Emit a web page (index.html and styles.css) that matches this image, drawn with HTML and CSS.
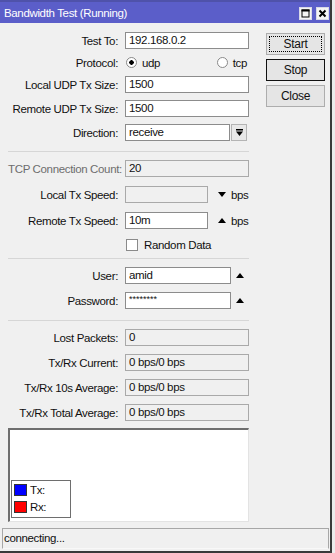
FILE: index.html
```html
<!DOCTYPE html>
<html lang="en">
<head>
  <meta charset="UTF-8">
  <meta name="viewport" content="width=device-width, initial-scale=1.0">
  <title>Bandwidth Test (Running)</title>
  <link rel="stylesheet" href="styles.css">
</head>
<body>

  <div class="window">
    <div class="titlebar">
      <span class="title">Bandwidth Test (Running)</span>
      <span class="title-buttons">
        <svg class="title-btn" width="13" height="13" viewBox="0 0 13 13">
          <rect x="0.5" y="0.5" width="12" height="12" fill="#f4f4f4" stroke="#d8d8e8"/>
          <rect x="3" y="3" width="7" height="7" fill="none" stroke="#000" stroke-width="1"/>
          <rect x="2.5" y="2.5" width="8" height="2" fill="#000"/>
        </svg>
        <svg class="title-btn" width="13" height="13" viewBox="0 0 13 13">
          <rect x="0.5" y="0.5" width="12" height="12" fill="#f4f4f4" stroke="#d8d8e8"/>
          <path d="M3.5 3.5 L9.5 9.5 M9.5 3.5 L3.5 9.5" stroke="#000" stroke-width="2"/>
        </svg>
      </span>
    </div>

    <div class="content">
      <div class="form">

        <div class="group group-top">
          <div class="row">
            <span class="lbl">Test To:</span>
            <div class="field">192.168.0.2</div>
          </div>
          <div class="row row-small">
            <span class="lbl">Protocol:</span>
            <div class="radios">
              <span class="opt"><span class="radio on"></span>udp</span>
              <span class="opt"><span class="radio"></span>tcp</span>
            </div>
          </div>
          <div class="row">
            <span class="lbl">Local UDP Tx Size:</span>
            <div class="field">1500</div>
          </div>
          <div class="row">
            <span class="lbl">Remote UDP Tx Size:</span>
            <div class="field">1500</div>
          </div>
          <div class="row">
            <span class="lbl">Direction:</span>
            <div class="ctrl">
              <div class="field field-select">receive</div>
              <span class="drop-btn">
                <svg width="7" height="7" viewBox="0 0 7 7"><rect x="0" y="0" width="7" height="1.5" fill="#000"/><path d="M0 2.5 H7 L3.5 7 Z" fill="#000"/></svg>
              </span>
            </div>
          </div>
        </div>

        <div class="group group-speed">
          <div class="row">
            <span class="lbl lbl-disabled">TCP Connection Count:</span>
            <div class="field ro">20</div>
          </div>
          <div class="row">
            <span class="lbl">Local Tx Speed:</span>
            <div class="ctrl">
              <div class="field ro field-speed"></div>
              <svg class="arrow" width="8" height="5" viewBox="0 0 8 5"><path d="M0 0 H8 L4 5 Z" fill="#000"/></svg>
              <span class="unit">bps</span>
            </div>
          </div>
          <div class="row">
            <span class="lbl">Remote Tx Speed:</span>
            <div class="ctrl">
              <div class="field field-speed">10m</div>
              <svg class="arrow" width="8" height="5" viewBox="0 0 8 5"><path d="M0 5 H8 L4 0 Z" fill="#000"/></svg>
              <span class="unit">bps</span>
            </div>
          </div>
          <div class="row row-small">
            <span></span>
            <span class="opt"><span class="checkbox"></span>Random Data</span>
          </div>
        </div>

        <div class="group group-auth">
          <div class="row">
            <span class="lbl">User:</span>
            <div class="ctrl">
              <div class="field field-auth">amid</div>
              <svg class="arrow arrow-auth" width="8" height="5" viewBox="0 0 8 5"><path d="M0 5 H8 L4 0 Z" fill="#000"/></svg>
            </div>
          </div>
          <div class="row">
            <span class="lbl">Password:</span>
            <div class="ctrl">
              <div class="field field-auth pass">********</div>
              <svg class="arrow arrow-auth" width="8" height="5" viewBox="0 0 8 5"><path d="M0 5 H8 L4 0 Z" fill="#000"/></svg>
            </div>
          </div>
        </div>

        <div class="group group-stats">
          <div class="row">
            <span class="lbl">Lost Packets:</span>
            <div class="field ro">0</div>
          </div>
          <div class="row">
            <span class="lbl">Tx/Rx Current:</span>
            <div class="field ro">0 bps/0 bps</div>
          </div>
          <div class="row">
            <span class="lbl">Tx/Rx 10s Average:</span>
            <div class="field ro">0 bps/0 bps</div>
          </div>
          <div class="row">
            <span class="lbl">Tx/Rx Total Average:</span>
            <div class="field ro">0 bps/0 bps</div>
          </div>
        </div>

        <div class="graph">
          <div class="legend">
            <div class="legend-item"><span class="swatch swatch-tx"></span>Tx:</div>
            <div class="legend-item"><span class="swatch swatch-rx"></span>Rx:</div>
          </div>
        </div>

      </div>

      <div class="buttons">
        <button class="btn btn-focus">Start</button>
        <button class="btn btn-default">Stop</button>
        <button class="btn">Close</button>
      </div>
    </div>

    <div class="status">connecting...</div>
  </div>

</body>
</html>
```

FILE: styles.css
```css
body {
  margin: 0;
  background-color: #ececec;
  font-family: "Liberation Sans", Arial, sans-serif;
  font-size: 11.5px;
  letter-spacing: -0.35px;
  color: #111;
}

.window {
  width: 330px;
  height: 551px;
  background-color: #f0f0f0;
  border-right: 2px solid #3a3a3a;
  border-bottom: 2px solid #3a3a3a;
  display: flex;
  flex-direction: column;
}

.titlebar {
  height: 23px;
  box-sizing: border-box;
  border-top: 2px solid #4f52aa;
  background-color: #5b5ec9;
  color: white;
  font-size: 11.5px;
  display: flex;
  align-items: center;
  justify-content: space-between;
  padding: 1px 1px 0 4px;
}

.title-buttons {
  display: flex;
  gap: 4px;
}

.title-btn {
  display: block;
}

.content {
  display: flex;
  padding: 9px 0 0 8px;
}

.form {
  width: 241px;
  display: flex;
  flex-direction: column;
}

.group {
  display: flex;
  flex-direction: column;
}

.group-top {
  gap: 7px;
  padding-bottom: 10px;
}

.group-speed {
  gap: 9px;
  padding: 8px 0 7px;
  border-top: 1px solid #d6d6d6;
}

.group-auth {
  gap: 8px;
  padding: 8px 0 11px;
  border-top: 1px solid #d6d6d6;
}

.group-stats {
  gap: 8px;
  padding-top: 8px;
  border-top: 1px solid #d6d6d6;
}

.row {
  display: grid;
  grid-template-columns: 110px 124px;
  column-gap: 7px;
  align-items: center;
  height: 17px;
}

.row-small {
  height: 13px;
}

.lbl {
  text-align: right;
  white-space: nowrap;
}

.lbl-disabled {
  color: #6d6d6d;
}

.field {
  box-sizing: border-box;
  height: 17px;
  border: 1px solid #8c8c8c;
  background-color: white;
  padding: 0 3px;
  line-height: 15px;
  white-space: nowrap;
  overflow: hidden;
}

.field.ro {
  background-color: #f0f0f0;
  border-color: #a9a9a9;
}

.ctrl {
  display: flex;
  align-items: center;
}

.field-select {
  width: 105px;
}

.drop-btn {
  box-sizing: border-box;
  width: 16px;
  height: 17px;
  margin-left: 1px;
  border: 1px solid #b4b4b4;
  background-color: #e8e8e8;
  display: flex;
  align-items: center;
  justify-content: center;
}

.field-speed {
  width: 83px;
}

.field-auth {
  width: 106px;
}

.pass {
  font-size: 9px;
  line-height: 12px;
  letter-spacing: 0;
}

.arrow {
  margin-left: 10px;
}

.arrow-auth {
  margin-left: 5px;
}

.unit {
  margin-left: 5px;
}

.radios {
  display: flex;
  justify-content: space-between;
  padding: 0 2px 0 1px;
}

.opt {
  display: flex;
  align-items: center;
}

.radio {
  box-sizing: border-box;
  width: 11px;
  height: 11px;
  margin-right: 5px;
  border-radius: 50%;
  border: 1px solid #8a8a8a;
  background-color: white;
}

.radio.on {
  background: radial-gradient(circle, #000 0 2px, #fff 2.5px);
}

.checkbox {
  box-sizing: border-box;
  width: 12px;
  height: 12px;
  margin: 0 6px 0 1px;
  border: 1px solid #8a8a8a;
  background-color: white;
}

.graph {
  margin-top: 7px;
  height: 94px;
  box-sizing: border-box;
  background-color: white;
  border-style: solid;
  border-width: 2px 1px 1px 2px;
  border-color: #6e6e6e #e3e3e3 #e3e3e3 #6e6e6e;
  display: flex;
  align-items: flex-end;
  padding: 0 0 3px 1px;
}

.legend {
  width: 60px;
  height: 38px;
  box-sizing: border-box;
  border: 1px solid #6e6e6e;
  padding: 3px 2px;
  display: flex;
  flex-direction: column;
  gap: 5px;
}

.legend-item {
  display: flex;
  align-items: center;
  height: 12px;
}

.swatch {
  box-sizing: border-box;
  width: 13px;
  height: 12px;
  margin-right: 3px;
  border: 1px solid #333;
}

.swatch-tx {
  background-color: #0000ff;
}

.swatch-rx {
  background-color: #ff0000;
}

.buttons {
  margin-left: 17px;
  padding-top: 1px;
  display: flex;
  flex-direction: column;
  gap: 4px;
}

.btn {
  width: 59px;
  height: 22px;
  box-sizing: border-box;
  border: 1px solid #adadad;
  background-color: #e5e5e5;
  font-family: "Liberation Sans", Arial, sans-serif;
  font-size: 12px;
  letter-spacing: -0.3px;
  color: #111;
  padding: 0;
}

.btn-focus {
  outline: 1px dotted #000;
  outline-offset: -4px;
}

.btn-default {
  border-color: #111;
}

.status {
  margin: auto 1px 2px 2px;
  height: 21px;
  box-sizing: border-box;
  border: 1px solid #a7a7a7;
  border-bottom-color: #f8f8f8;
  padding-left: 1px;
  line-height: 19px;
  font-size: 11.5px;
}
```
